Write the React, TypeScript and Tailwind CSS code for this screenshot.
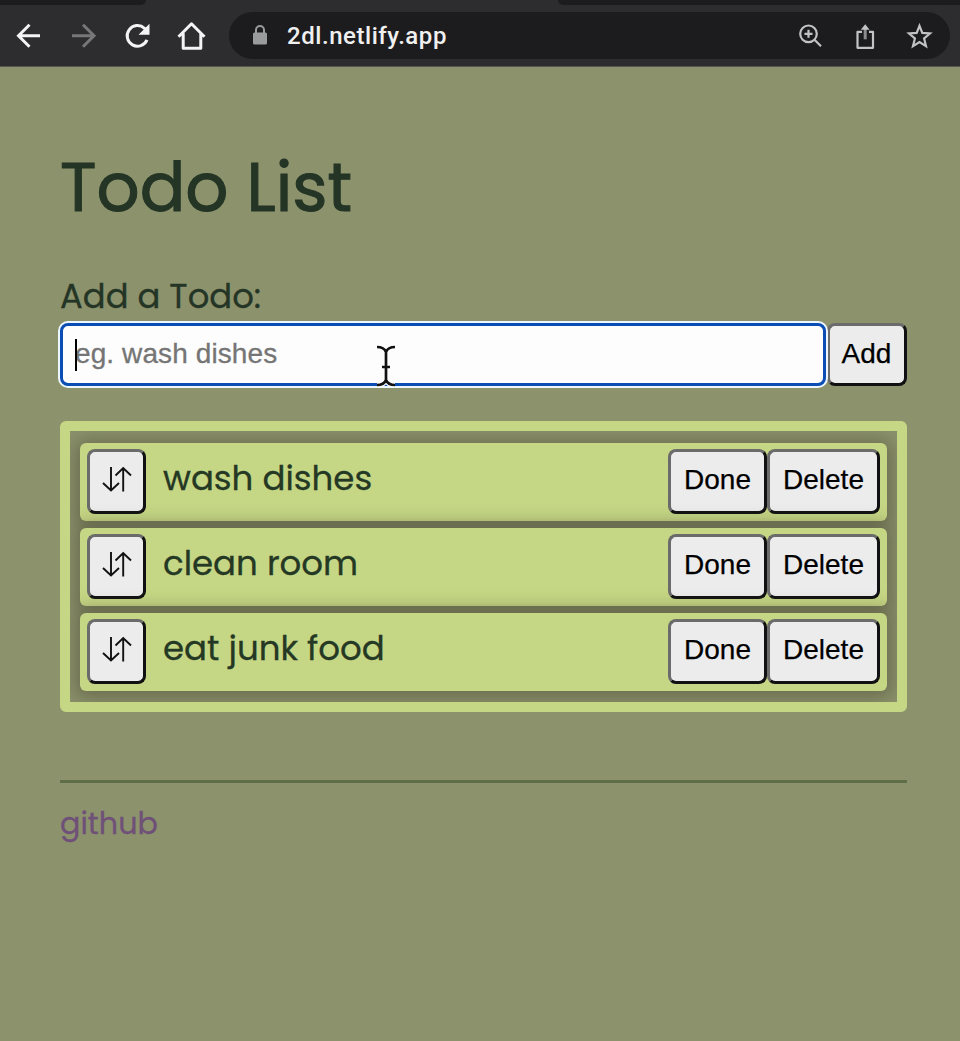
import type { ReactNode } from "react";

const display = "font-[Poppins,Inter,sans-serif] [font-feature-settings:'cv11']";
const buttonBase =
  "flex shrink-0 items-center justify-center rounded-[8px] border-[3px] border-t-[#6b6b6b] border-l-[#6b6b6b] border-r-[#111113] border-b-[#111113] bg-[#ececec] font-['Liberation_Sans',Arial,sans-serif] text-[28px] leading-[30px] text-black whitespace-nowrap [-webkit-text-stroke:0.25px_#000]";

function Button({ className, children, label }: { className: string; children: ReactNode; label?: string }) {
  return (
    <button type="button" aria-label={label} className={`${buttonBase} ${className}`}>
      {children}
    </button>
  );
}

function SwapArrows() {
  return (
    <svg width="30" height="28" viewBox="0 0 30 28" fill="none" stroke="#111" strokeWidth="1.9" className="-translate-y-[2.500px]">
      <path d="M9 1.500V25.500M1 17.500L9 25L17 17.500" />
      <path d="M21.200 26V2M13.500 10L21.200 2.500L29 10" />
    </svg>
  );
}

function Toolbar() {
  return (
    <header className="flex h-[67px] flex-col border-b border-[#56574f] bg-[#2d2d30]">
      <div className="flex h-[5px] justify-between">
        <div className="w-[146px] rounded-br-[5px] bg-[#1c1c1f]" />
        <div className="w-[402px] rounded-bl-[5px] bg-[#1c1c1f]" />
      </div>
      <div className="flex h-[61px] items-center pr-[10px]">
        <svg width="229" height="60" viewBox="0 0.7 229 60" fill="none" strokeWidth="3" className="shrink-0">
          <path d="M40 30.500H19M29.500 19.500L18.500 30.500L29.500 41.500" stroke="#f4f4f4" />
          <path d="M72 30.500H93M83 19.500L94 30.500L83 41.500" stroke="#77777a" />
          <path d="M147 34.500A10.300 10.300 0 1 1 144.500 23L147 25.500" stroke="#f4f4f4" />
          <path d="M149.500 18.500V29.500H138.500Z" fill="#f4f4f4" />
          <path d="M178.500 31.500L191.500 18.500L204.500 31.500M183.200 28V43H200.800V28" stroke="#f4f4f4" strokeLinejoin="round" />
        </svg>
        <div className="flex h-[47px] flex-1 items-center rounded-full bg-[#1c1c1f]">
          <svg width="14" height="20" viewBox="0 0 14 20" className="ml-[24px] -translate-y-px">
            <path d="M3 9V5a4 4 0 0 1 8 0v4" fill="none" stroke="#999b9d" strokeWidth="2" />
            <rect x="0" y="7.500" width="14" height="12" rx="1.500" fill="#999b9d" />
          </svg>
          <span className="ml-[20px] font-[Roboto,sans-serif] text-[24px] leading-[30px] font-medium tracking-[0.55px] text-[#f0f0f0]">2dl.netlify.app</span>
          <svg width="138" height="30" viewBox="798 20.7 138 30" fill="none" stroke="#c2c3c5" strokeWidth="2.200" className="ml-auto mr-[14px]">
            <circle cx="808.500" cy="33.500" r="8.300" />
            <path d="M814.500 39.500L821 46M804.500 33.500H812.500M808.500 29.500V37.500" />
            <path d="M862 31.500H857.500V47.500H873V31.500H869" strokeLinejoin="round" />
            <path d="M865.200 39V27" stroke="#8b8c8e" strokeWidth="3" />
            <path d="M860.800 29.500L865.200 24L869.600 29.500Z" fill="#c2c3c5" stroke="none" />
            <path d="M919.500 25.500L922.300 32.600L930 33.200L924.100 38.200L926 45.800L919.500 41.700L913 45.800L914.900 38.200L909 33.200L916.700 32.600Z" />
          </svg>
        </div>
      </div>
    </header>
  );
}

function TodoItem({ text }: { text: string }) {
  return (
    <li className="flex h-[78px] items-start rounded-[6px] bg-[#c5d684] pt-[6px] pr-[7px] pl-[7px] shadow-[0_2px_18px_5px_rgba(85,85,60,0.6)]">
      <Button className="h-[65px] w-[59px]" label="Reorder">
        <SwapArrows />
      </Button>
      <span className={`${display} mt-[9px] ml-[17px] text-[34px] leading-[40px] whitespace-nowrap text-[#243824] [-webkit-text-stroke:0.3px_#243824]`}>{text}</span>
      <div className="ml-auto flex">
        <Button className="h-[65px] w-[99px] pb-[3px]">Done</Button>
        <Button className="h-[65px] w-[113px] pb-[3px]">Delete</Button>
      </div>
    </li>
  );
}

export default function App() {
  return (
    <div className="h-[1041px] w-[960px] overflow-hidden bg-[#8c926c]">
      <Toolbar />
      <main className="flex flex-col pr-[53px] pl-[60px]">
        <h1 className={`${display} mt-[81px] text-[67.5px] leading-[80px] font-normal whitespace-nowrap text-[#243526] [-webkit-text-stroke:1.1px_#243526]`}>Todo List</h1>
        <label htmlFor="todo" className={`${display} mt-[49px] text-[33.8px] leading-[40px] whitespace-nowrap text-[#243526] [-webkit-text-stroke:0.3px_#243526]`}>
          Add a Todo:
        </label>
        <div className="mt-[6px] flex h-[63px]">
          <div className="relative flex w-[767px] pr-[1px]">
            <input
              id="todo"
              placeholder="eg. wash dishes"
              className="h-[63px] w-full rounded-[8px] border-[3px] border-[#0a4db5] bg-[#fdfdfd] pb-[2px] pl-[12px] font-['Liberation_Sans',Arial,sans-serif] text-[28px] leading-[30px] tracking-[0.1px] shadow-[0_0_0_2px_#ecf7ff] outline-none placeholder:text-[#757575] [-webkit-text-stroke:0.3px_#757575]"
            />
            <span className="absolute top-[16px] left-[15px] h-[32px] w-[1.5px] bg-black" />
            <svg width="22" height="44" viewBox="0 0 22 44" fill="none" className="absolute top-[21px] left-[315px]">
              <path d="M2 3Q9 3 11 8Q13 3 20 3M2 41Q9 41 11 36Q13 41 20 41M11 7V37M7 23H15" stroke="#fff" strokeWidth="5" />
              <path d="M2 3Q9 3 11 8Q13 3 20 3M2 41Q9 41 11 36Q13 41 20 41M11 7V37M7 23H15" stroke="#111" strokeWidth="2.700" />
            </svg>
          </div>
          <Button className="h-[63px] w-[80px] pr-[1px] pb-[2px]">Add</Button>
        </div>
        <ul className="mt-[35px] flex h-[291px] flex-col gap-[7px] overflow-hidden rounded-[6px] border-[10px] border-[#c5d684] px-[10px] pt-[12px]">
          <TodoItem text="wash dishes" />
          <TodoItem text="clean room" />
          <TodoItem text="eat junk food" />
        </ul>
        <hr className="mt-[68px] border-t-[3px] border-[#5f6e49]" />
        <a className={`${display} mt-[21px] self-start text-[30.2px] leading-[40px] text-[#6f5078] [-webkit-text-stroke:0.3px_#6f5078]`}>github</a>
      </main>
    </div>
  );
}
